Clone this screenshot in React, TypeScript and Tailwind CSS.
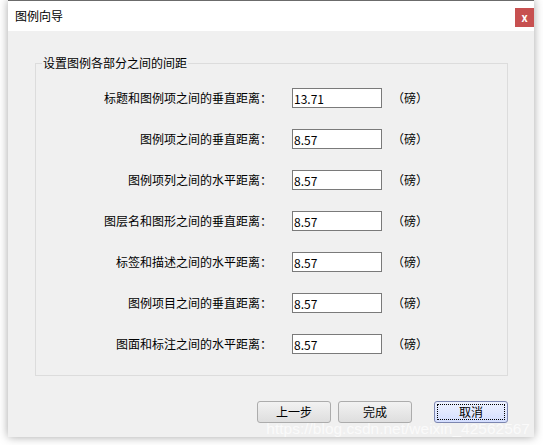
import React from 'react';

const rows = [
  { label: '标题和图例项之间的垂直距离：', value: '13.71' },
  { label: '图例项之间的垂直距离：', value: '8.57' },
  { label: '图例项列之间的水平距离：', value: '8.57' },
  { label: '图层名和图形之间的垂直距离：', value: '8.57' },
  { label: '标签和描述之间的水平距离：', value: '8.57' },
  { label: '图例项目之间的垂直距离：', value: '8.57' },
  { label: '图面和标注之间的水平距离：', value: '8.57' },
];

const font = { fontFamily: '"Noto Sans CJK SC", "Noto Sans", sans-serif' };

export default function App() {
  return (
    <div className="w-[543px] h-[445px] bg-white overflow-hidden text-[12px] text-black" style={font}>
      <div className="relative ml-[8px] w-[526px] h-[437px] flex flex-col border-t border-[#6b6b6b] shadow-[0_0_9px_rgba(0,0,0,0.35)]">
        {/* title bar */}
        <div className="h-[30px] bg-white flex items-start justify-between">
          <span className="ml-[7px] mt-[7px] leading-[16px] text-[12px]">图例向导</span>
          <button className="mt-[7px] w-[19px] h-[19px] bg-[#c75050] flex items-center justify-center text-white text-[11px] font-bold leading-none">
            x
          </button>
        </div>

        {/* body */}
        <div className="flex-1 bg-[#f0f0f0] flex flex-col">
          <fieldset className="mt-[24px] ml-[27px] mr-[26px] h-[321px] border border-[#dcdcdc] pl-0 pr-0 pt-[17px]">
            <legend className="ml-[6px] px-[1px] leading-[16px]">设置图例各部分之间的间距</legend>
            <div className="flex flex-col gap-[21px]">
              {rows.map((row) => (
                <div key={row.label} className="flex items-center h-[20px]">
                  <span className="w-[236px] text-right whitespace-nowrap">{row.label}</span>
                  <input
                    readOnly
                    value={row.value}
                    className="ml-[20px] w-[90px] h-[20px] border border-[#7a7a7a] bg-white px-[1px] text-[12px] leading-[18px] outline-none"
                  />
                  <span className="ml-[10px]">（磅）</span>
                </div>
              ))}
            </div>
          </fieldset>

          <div className="mt-[25px] mr-[26px] flex justify-end">
            <button className="w-[74px] h-[22px] rounded-[3px] border border-[#acacac] bg-gradient-to-b from-[#f2f2f2] to-[#dedede] text-[12px]">
              上一步
            </button>
            <button className="ml-[7px] w-[74px] h-[22px] rounded-[3px] border border-[#acacac] bg-gradient-to-b from-[#f2f2f2] to-[#dedede] text-[12px]">
              完成
            </button>
            <button className="ml-[22px] w-[74px] h-[22px] rounded-[3px] border border-[#7c86b0] bg-gradient-to-b from-[#eef2ff] to-[#d4defe] p-[2px] text-[12px]">
              <span className="flex w-full h-full items-center justify-center border border-dotted border-black">
                取消
              </span>
            </button>
          </div>
        </div>

        <span
          className="absolute right-[4px] bottom-[-3px] text-[15.5px] text-white/70 whitespace-nowrap pointer-events-none"
          style={{ fontFamily: '"Liberation Sans", Arial, sans-serif' }}
        >
          https://blog.csdn.net/weixin_42562567
        </span>
      </div>
    </div>
  );
}
